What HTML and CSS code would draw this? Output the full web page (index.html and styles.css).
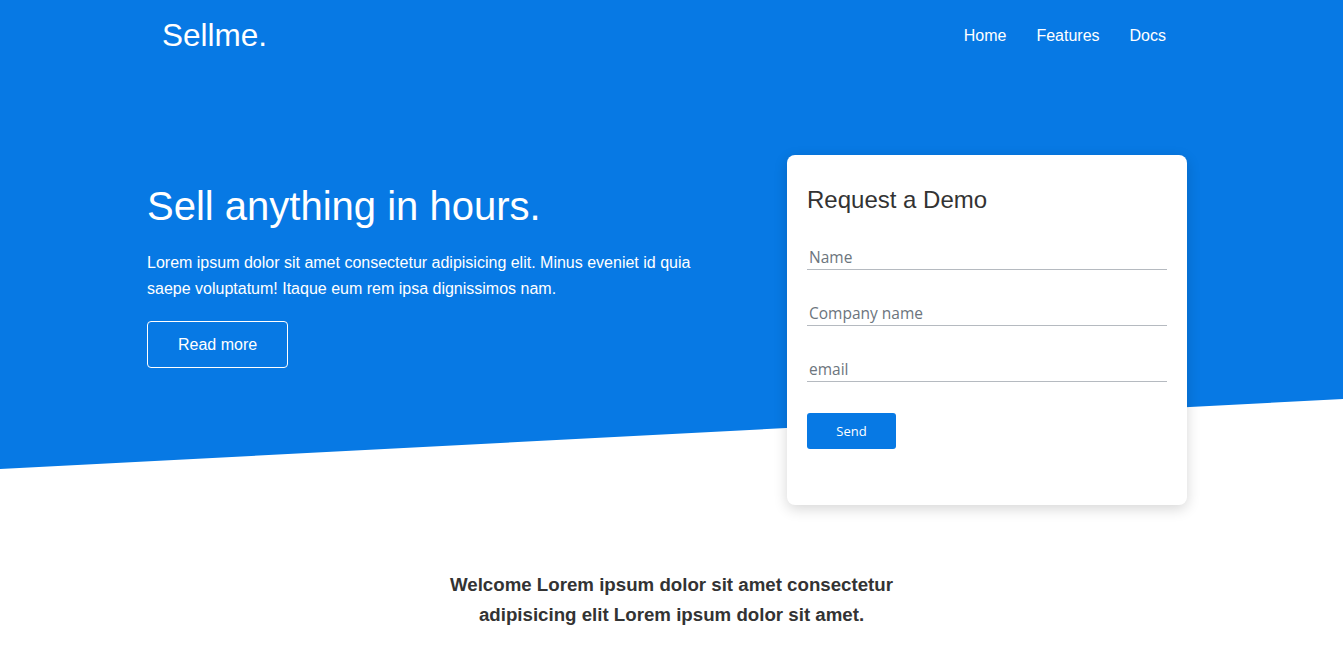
FILE: index.html
```html
<!DOCTYPE html>
<html lang="en">
<head>
<meta charset="utf-8">
<title>Sellme.</title>
<link rel="stylesheet" href="styles.css">
</head>
<body>
<header class="hero">
  <nav class="nav">
    <a class="logo" href="#">Sellme.</a>
    <ul class="menu">
      <li><a href="#">Home</a></li>
      <li><a href="#">Features</a></li>
      <li><a href="#">Docs</a></li>
    </ul>
  </nav>
  <div class="hero-body">
    <div class="intro">
      <h1 class="title">Sell anything in hours.</h1>
      <p class="lead">Lorem ipsum dolor sit amet consectetur adipisicing elit. Minus eveniet id quia saepe voluptatum! Itaque eum rem ipsa dignissimos nam.</p>
      <a class="btn-outline" href="#">Read more</a>
    </div>
    <form class="card">
      <h2 class="card-title">Request a Demo</h2>
      <input class="field" type="text" placeholder="Name">
      <input class="field" type="text" placeholder="Company name">
      <input class="field" type="email" placeholder="email">
      <button class="send" type="button">Send</button>
    </form>
  </div>
</header>
<section class="welcome">
  <p class="welcome-text">Welcome Lorem ipsum dolor sit amet consectetur adipisicing elit Lorem ipsum dolor sit amet.</p>
</section>
</body>
</html>
```
FILE: styles.css
```css
* { box-sizing: border-box; }
html, body { margin: 0; padding: 0; background: #fff; }
body {
  font-family: "Liberation Sans", Arial, sans-serif;
  color: #333;
}
a { text-decoration: none; }

.hero {
  position: relative;
  isolation: isolate;
  color: #fff;
}
.hero::before {
  content: "";
  position: absolute;
  left: 0; top: 0; right: 0;
  height: 469px;
  background: #0779e4;
  clip-path: polygon(0 0, 100% 0, 100% 399px, 0 469px);
  z-index: -1;
}

.nav {
  height: 70px;
  display: flex;
  align-items: center;
  justify-content: space-between;
  padding: 2px 162px 0 162px;
}
.logo {
  color: #fff;
  font-size: 31.5px;
  line-height: 1;
}
.menu {
  list-style: none;
  margin: 0;
  padding: 0;
  display: flex;
  gap: 30px;
  margin-right: 15px;
}
.menu a {
  color: #fff;
  font-size: 16px;
}

.hero-body {
  display: flex;
  align-items: flex-start;
  padding: 85px 0 0 147px;
  gap: 70px;
}
.intro {
  width: 570px;
  padding-top: 28px;
}
.title {
  margin: 0 0 21px;
  font-size: 40px;
  font-weight: 400;
  line-height: 46px;
}
.lead {
  margin: 0 0 19px;
  font-size: 16px;
  line-height: 26px;
  max-width: 560px;
}
.btn-outline {
  display: inline-block;
  color: #fff;
  border: 1px solid #fff;
  border-radius: 4px;
  padding: 12px 30px;
  font-size: 16px;
  line-height: 21px;
}

.card {
  width: 400px;
  background: #fff;
  border-radius: 8px;
  box-shadow: 0 4px 14px rgba(0, 0, 0, 0.16);
  padding: 31px 20px 56px;
  color: #333;
}
.card-title {
  margin: 0 0 30px;
  font-size: 24px;
  font-weight: 400;
  line-height: 28px;
  color: #333;
}
.field {
  display: block;
  width: 100%;
  height: 26px;
  margin: 0 0 30px;
  padding: 0 2px;
  border: 0;
  border-bottom: 1px solid #b5bac0;
  font-family: "Open Sans", "Noto Sans", sans-serif;
  font-size: 15.5px;
  color: #495057;
  background: transparent;
  outline: none;
}
.field::placeholder { color: #6c757d; opacity: 1; }
.send {
  display: block;
  width: 89px;
  height: 36px;
  margin-top: 31px;
  border: 0;
  border-radius: 3px;
  background: #0779e4;
  color: #fff;
  font-family: "Open Sans", "Noto Sans", sans-serif;
  font-size: 13px;
}
.card .field:nth-of-type(3) { margin-bottom: 0; }

.welcome {
  padding: 65px 0 40px;
  display: flex;
  justify-content: center;
}
.welcome-text {
  margin: 0;
  width: 490px;
  text-align: center;
  font-size: 18.7px;
  font-weight: 700;
  line-height: 30px;
  color: #333;
}
```
